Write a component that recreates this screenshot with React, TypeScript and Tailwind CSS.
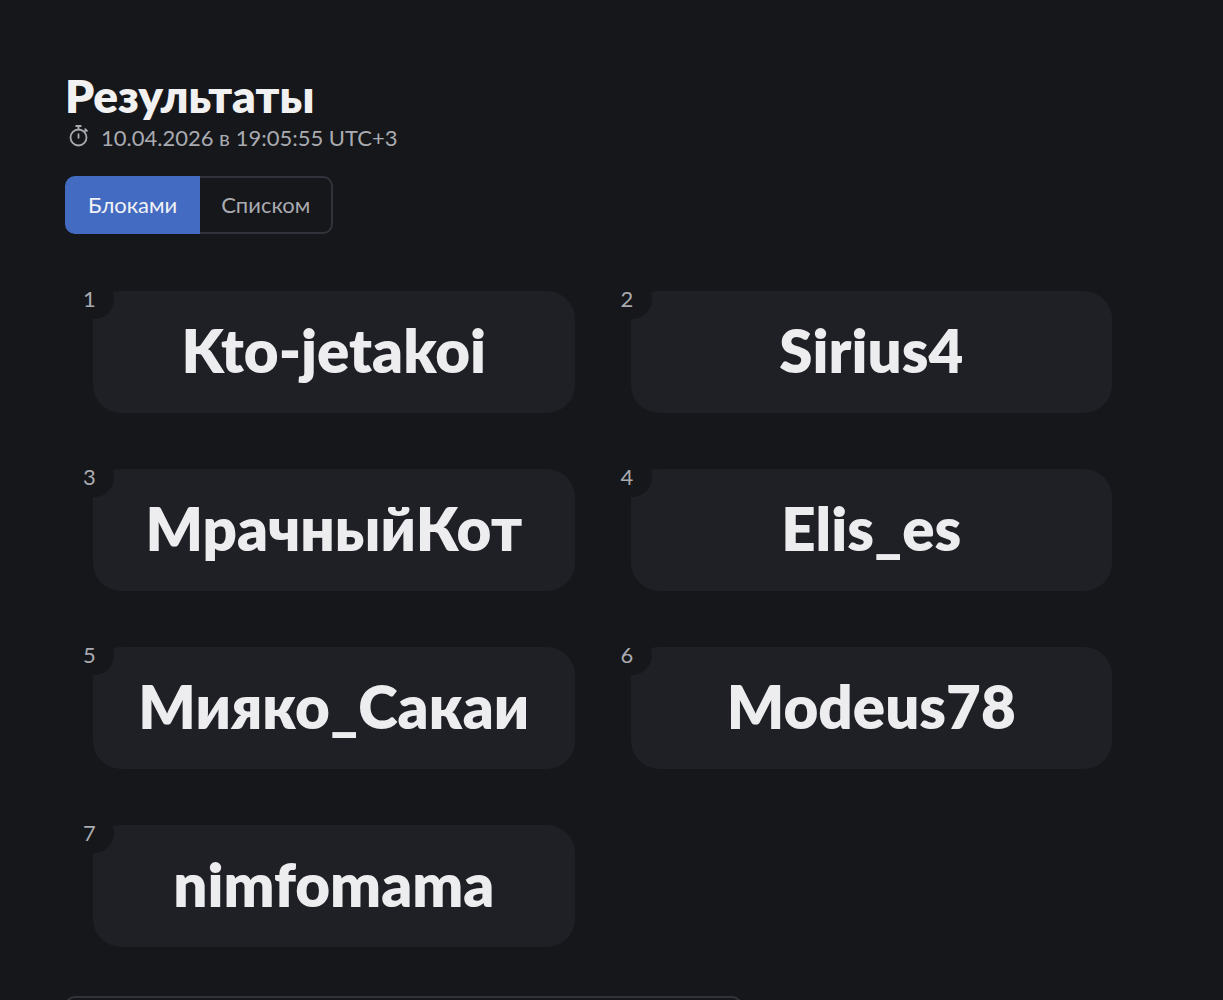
import { useState } from "react";

const players = [
  "Kto-jetakoi",
  "Sirius4",
  "МрачныйКот",
  "Elis_es",
  "Мияко_Сакаи",
  "Modeus78",
  "nimfomama",
];

function StopwatchIcon() {
  return (
    <svg
      viewBox="0 0 22 22"
      fill="none"
      stroke="currentColor"
      strokeWidth="1.8"
      strokeLinecap="round"
      className="mb-1 size-[22px] shrink-0"
      aria-hidden="true"
    >
      <circle cx="10.5" cy="12.5" r="8" />
      <path d="M8.2 1h4.6M10.5 1.3v3M10.5 9.2v3.6M16.5 6.6l1.6-1.6M17.2 4.1l1.8 1.8" />
    </svg>
  );
}

function PlayerCard({ place, name }: { place: number; name: string }) {
  return (
    <li className="relative m-7 flex h-[122px] items-center justify-center rounded-[28px] bg-[#1e2025] pb-1">
      <span className="absolute -left-7 -top-3 flex h-10 w-[49px] items-center justify-center rounded-[22px] bg-[#16171b] text-[22px] leading-8 text-[#a9abb1]">
        {place}
      </span>
      <strong className="text-[60px] font-extrabold leading-[72px] text-[#ededf0]">{name}</strong>
    </li>
  );
}

export default function App() {
  const [view, setView] = useState("blocks");
  const tab = "h-[58px] cursor-pointer border-2 px-[21px] text-[22px] leading-8";
  const active = "border-[#436bc1] bg-[#436bc1] text-[#f1f2f6]";
  const idle = "border-[#31333b] text-[#a9abb1]";
  return (
    <div className="min-h-screen bg-[#16171b] pl-[65px] pr-[83px] pt-[70px] font-[Lato,'Noto_Sans',sans-serif]">
      <h1 className="text-[46px] font-extrabold leading-[52px] text-[#f1f1f1]">Результаты</h1>
      <p className="flex h-8 items-center gap-[11px] pl-[3px] text-[22px] leading-8 text-[#a9abb1]">
        <StopwatchIcon />
        <time>10.04.2026 в 19:05:55 UTC+3</time>
      </p>
      <div className="mt-[22px] flex">
        <button type="button" onClick={() => setView("blocks")} className={`${tab} rounded-l-[10px] ${view === "blocks" ? active : idle}`}>
          Блоками
        </button>
        <button type="button" onClick={() => setView("list")} className={`${tab} rounded-r-[10px] border-l-0 ${view === "list" ? active : idle}`}>
          Списком
        </button>
      </div>
      <ol className={view === "blocks" ? "mt-[29px] grid grid-cols-2" : "mt-[29px] grid grid-cols-1"}>
        {players.map((name, i) => (
          <PlayerCard key={name} place={i + 1} name={name} />
        ))}
      </ol>
      <div className="mt-[21px] h-1 overflow-hidden">
        <div className="h-16 w-full max-w-[677px] rounded-[10px] border-2 border-[#31333b]" />
      </div>
    </div>
  );
}
